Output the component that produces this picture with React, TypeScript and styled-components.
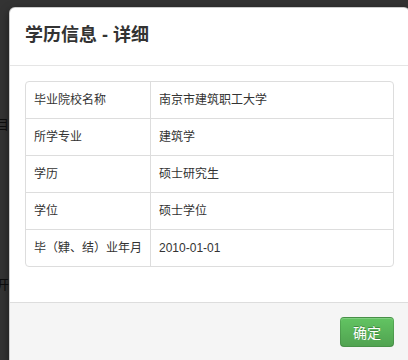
import React from 'react';
import styled, { createGlobalStyle } from 'styled-components';

const rows = [
  { label: '毕业院校名称', value: '南京市建筑职工大学' },
  { label: '所学专业', value: '建筑学' },
  { label: '学历', value: '硕士研究生' },
  { label: '学位', value: '硕士学位' },
  { label: '毕（肄、结）业年月', value: '2010-01-01' },
];

const GlobalStyle = createGlobalStyle`
  html, body {
    margin: 0;
    padding: 0;
    background: #333333;
    overflow: hidden;
  }
  body {
    font-family: 'Liberation Sans', 'Noto Sans CJK SC', sans-serif;
    color: #333;
  }
`;

const Backdrop = styled.div`
  display: flex;
  align-items: flex-start;
  height: 360px;
  padding-top: 7px;
  box-sizing: border-box;
  background: #333333;
`;

const Side = styled.div`
  width: 9px;
  flex: none;
  overflow: hidden;
  display: flex;
  flex-direction: column;
  align-items: flex-end;
  padding-top: 108px;
`;

const BgText = styled.div<{ gap?: number }>`
  white-space: nowrap;
  font-size: 13px;
  line-height: 20px;
  color: #0d0d0d;
  margin-top: ${(p) => p.gap || 0}px;
`;

const Modal = styled.div`
  flex: none;
  width: 399px;
  background: #fff;
  border: 1px solid rgba(0, 0, 0, 0.2);
  border-radius: 6px 6px 0 0;
  box-shadow: 0 3px 9px rgba(0, 0, 0, 0.5);
`;

const Header = styled.div`
  padding: 14px 15px 16px;
  border-bottom: 1px solid #e5e5e5;
`;

const Title = styled.h4`
  margin: 0;
  font-size: 18px;
  line-height: 27px;
  font-weight: 700;
  color: #333;
`;

const Body = styled.div`
  padding: 15px;
`;

const Table = styled.table`
  width: 100%;
  margin-bottom: 20px;
  border: 1px solid #ddd;
  border-radius: 4px;
  border-collapse: separate;
  border-spacing: 0;
`;

const Cell = styled.td<{ first?: boolean; top?: boolean }>`
  padding: 8px;
  font-size: 12px;
  line-height: 20px;
  color: #333;
  text-align: left;
  vertical-align: top;
  border-top: ${(p) => (p.top ? 'none' : '1px solid #ddd')};
  border-left: ${(p) => (p.first ? 'none' : '1px solid #ddd')};
  width: ${(p) => (p.first ? '106px' : 'auto')};
  white-space: nowrap;
`;

const Footer = styled.div`
  padding: 14px 15px 15px;
  background: #f5f5f5;
  border-top: 1px solid #ddd;
  display: flex;
  justify-content: flex-end;
`;

const Button = styled.button`
  height: 30px;
  padding: 0 12px;
  font-family: 'Liberation Sans', 'Noto Sans CJK SC', sans-serif;
  font-size: 14px;
  color: #fff;
  text-shadow: 0 -1px 0 rgba(0, 0, 0, 0.25);
  background: linear-gradient(#62c462, #51a351);
  border: 1px solid rgba(0, 0, 0, 0.12);
  border-bottom-color: rgba(0, 0, 0, 0.25);
  border-radius: 4px;
  box-shadow: inset 0 1px 0 rgba(255, 255, 255, 0.2);
  cursor: pointer;
`;

const App = () => {
  return (
    <>
      <GlobalStyle />
      <Backdrop>
        <Side>
          <BgText>-目</BgText>
          <BgText gap={140}>开</BgText>
        </Side>
        <Modal>
          <Header>
            <Title>学历信息 - 详细</Title>
          </Header>
          <Body>
            <Table>
              <tbody>
                {rows.map((r, i) => (
                  <tr key={r.label}>
                    <Cell first top={i === 0}>
                      {r.label}
                    </Cell>
                    <Cell top={i === 0}>{r.value}</Cell>
                  </tr>
                ))}
              </tbody>
            </Table>
          </Body>
          <Footer>
            <Button>确定</Button>
          </Footer>
        </Modal>
      </Backdrop>
    </>
  );
};

export default App;
